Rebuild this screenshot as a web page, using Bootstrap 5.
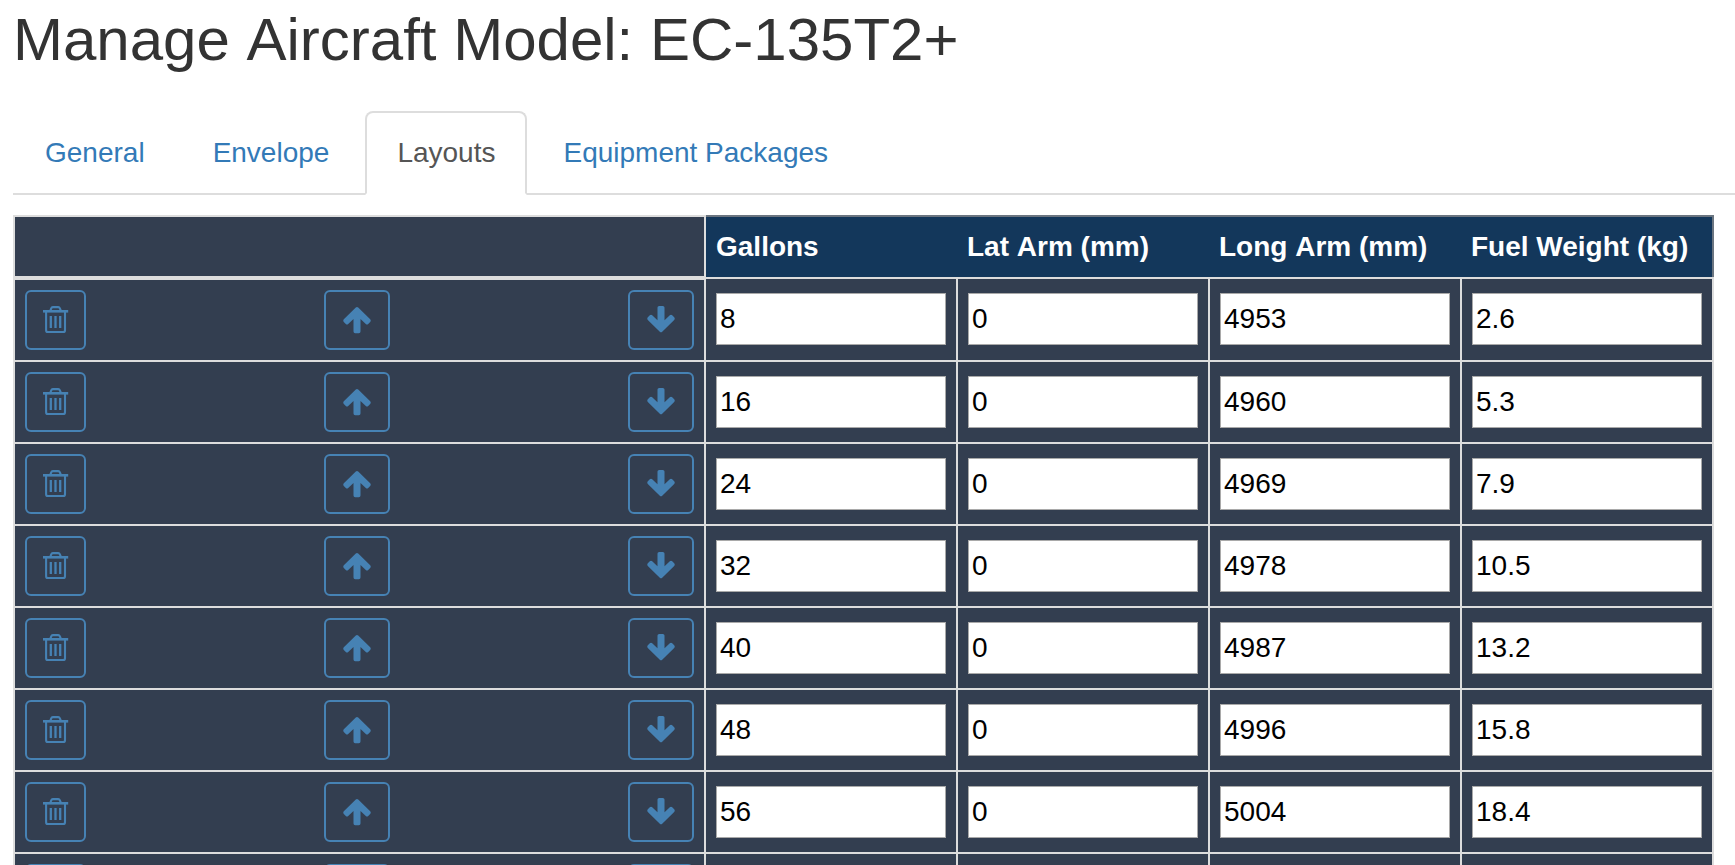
<!DOCTYPE html>
<html lang="en">
<head>
  <meta charset="UTF-8" />
  <meta name="viewport" content="width=device-width, initial-scale=1.0"/>
  <title>Manage Aircraft Model</title>
  <link href="https://cdn.jsdelivr.net/npm/bootstrap@5.3.0/dist/css/bootstrap.min.css" rel="stylesheet">
  <style>
    body {
      font-family: "Liberation Sans", Arial, sans-serif;
      font-size: 28px;
      line-height: 40px;
      color: #333;
      height: 100vh;
      padding-left: 13px;
    }
    .page-title {
      font-size: 60px;
      line-height: 66px;
      padding-top: 7px;
      margin-bottom: 38px;
    }
    .no-kern { font-kerning: none; }
    .nav-tabs {
      --bs-nav-tabs-border-width: 2px;
      --bs-nav-tabs-border-color: #ddd;
      border-bottom: 2px solid #ddd;
      margin-bottom: 20px;
    }
    .nav-tabs .nav-link {
      font-size: 28px;
      padding: 20px 30px;
      margin: 0 4px -2px 0;
      border: 2px solid transparent;
      border-radius: 8px 8px 0 0;
      color: #337ab7;
    }
    .nav-tabs .nav-link.active {
      color: #555;
      background-color: #fff;
      border-color: #ddd #ddd #fff;
    }
    .fuel-table {
      width: 1701px;
      table-layout: fixed;
      border-collapse: collapse;
    }
    .fuel-table .col-actions { width: 691px; }
    .fuel-table .col-value { width: 252px; }
    .fuel-table td, .fuel-table th {
      padding: 10px;
      border: 2px solid #ddd;
      background-color: #333e50;
      vertical-align: middle;
    }
    .fuel-table thead th {
      height: 62px;
      padding: 0 10px;
      background-color: #13375b;
      color: #fff;
      border-width: 2px 0;
      border-color: #6b7580 #6b7580 #ddd;
      white-space: nowrap;
    }
    .fuel-table thead th:last-child { border-right-width: 2px; }
    .fuel-table thead td {
      border-bottom-width: 4px;
      padding: 0;
    }
    .fuel-table tbody tr:first-child td + td { padding-bottom: 11px; }
    .btn-tool {
      width: 66px;
      height: 60px;
      padding: 0;
      border: 2px solid #4682b4;
      border-radius: 6px;
      color: #4682b4;
    }
    .btn-trash { width: 61px; }
    .btn-tool svg { display: block; margin: 0 auto; }
    .btn-trash svg { margin-left: 16px; }
    .fuel-table input {
      display: block;
      width: 230px;
      height: 52px;
      padding: 0 3px;
      border: 1px solid #a9a9a9;
      color: #000;
      background-color: #fff;
    }
  </style>
</head>
<body class="overflow-hidden bg-white">
  <h1 class="page-title no-kern fw-normal">Manage Aircraft Model: EC-135T2+</h1>

  <ul class="nav nav-tabs">
    <li class="nav-item"><a class="nav-link" href="#">General</a></li>
    <li class="nav-item"><a class="nav-link" href="#">Envelope</a></li>
    <li class="nav-item"><a class="nav-link active" href="#">Layouts</a></li>
    <li class="nav-item"><a class="nav-link" href="#">Equipment Packages</a></li>
  </ul>

  <table class="fuel-table">
    <colgroup>
      <col class="col-actions">
      <col class="col-value">
      <col class="col-value">
      <col class="col-value">
      <col>
    </colgroup>
    <thead>
      <tr>
        <td></td>
        <th>Gallons</th>
        <th class="no-kern">Lat Arm (mm)</th>
        <th class="no-kern">Long Arm (mm)</th>
        <th>Fuel Weight (kg)</th>
      </tr>
    </thead>
    <tbody id="fuelRows"></tbody>
  </table>

  <svg class="d-none">
    <symbol id="iconTrash" viewBox="0 0 26 28">
      <path d="M7.2 5.2 8.2 2.3Q8.7 1.1 9.8 1.1H15.2Q16.4 1.1 16.9 2.3L18 5.2M3.1 6V24.2Q3.1 26 4.8 26H20.2Q22 26 22 24.2V6" fill="none" stroke="currentColor" stroke-width="2.1"/>
      <path d="M0 5.3H25.2" fill="none" stroke="currentColor" stroke-width="2.6"/>
      <path d="M7.8 10V22M12.5 10V22M17.2 10V22" fill="none" stroke="currentColor" stroke-width="2.3"/>
    </symbol>
    <symbol id="iconUp" viewBox="0 0 28 28">
      <path d="M12.8 1.4.8 13.3Q-.3 14.6.8 15.9L2.8 18Q4 19 5.2 18L10.5 13V25.6Q10.5 27.2 12.2 27.2H15.8Q17.5 27.2 17.5 25.6V13L22.8 18Q24 19 25.2 18L27.2 15.9Q28.3 14.6 27.2 13.3L15.2 1.4Q14 .4 12.8 1.4Z" fill="currentColor"/>
    </symbol>
  </svg>

  <script src="https://cdn.jsdelivr.net/npm/bootstrap@5.3.0/dist/js/bootstrap.bundle.min.js"></script>
  <script>
    const stations = [
      [8, 0, 4953, 2.6],
      [16, 0, 4960, 5.3],
      [24, 0, 4969, 7.9],
      [32, 0, 4978, 10.5],
      [40, 0, 4987, 13.2],
      [48, 0, 4996, 15.8],
      [56, 0, 5004, 18.4],
      ['', '', '', '']
    ];

    const actions = `
      <div class="d-flex justify-content-between">
        <button class="btn btn-tool btn-trash" aria-label="Delete"><svg width="26" height="28"><use href="#iconTrash"/></svg></button>
        <button class="btn btn-tool" aria-label="Move up"><svg width="28" height="28"><use href="#iconUp"/></svg></button>
        <button class="btn btn-tool" aria-label="Move down"><svg width="28" height="28"><use href="#iconUp" transform="rotate(180 14 13.6)"/></svg></button>
      </div>`;

    const body = document.getElementById('fuelRows');
    stations.forEach(values => {
      const row = document.createElement('tr');
      row.innerHTML = `<td>${actions}</td>` +
        values.map(v => `<td><input type="text" value="${v}"></td>`).join('');
      body.appendChild(row);
    });
  </script>
</body>
</html>
